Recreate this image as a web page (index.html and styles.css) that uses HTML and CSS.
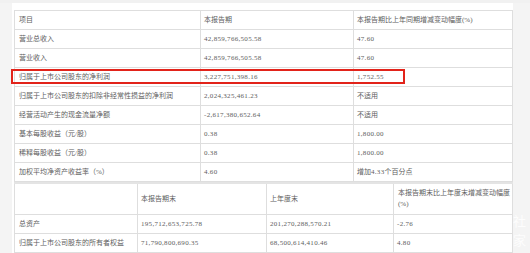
FILE: index.html
```html
<!DOCTYPE html>
<html lang="zh-CN">
<head>
<meta charset="utf-8">
<link rel="stylesheet" href="styles.css">
</head>
<body>
<div class="topstrip"></div>
<div class="panel">
  <div class="tables">
    <table class="t1">
      <colgroup><col class="c1"><col class="c2"><col class="c3"></colgroup>
      <tr><td>项目</td><td>本报告期</td><td>本报告期比上年同期增减变动幅度(%)</td></tr>
      <tr><td>营业总收入</td><td class="n">42,859,766,505.58</td><td class="n">47.60</td></tr>
      <tr><td>营业收入</td><td class="n">42,859,766,505.58</td><td class="n">47.60</td></tr>
      <tr><td>归属于上市公司股东的净利润</td><td class="n">3,227,751,398.16</td><td class="n">1,752.55</td></tr>
      <tr><td>归属于上市公司股东的扣除非经常性损益的净利润</td><td class="n">2,024,325,461.23</td><td>不适用</td></tr>
      <tr><td>经营活动产生的现金流量净额</td><td class="n">-2,617,380,652.64</td><td>不适用</td></tr>
      <tr><td>基本每股收益（元/股）</td><td class="n">0.38</td><td class="n">1,800.00</td></tr>
      <tr><td>稀释每股收益（元/股）</td><td class="n">0.38</td><td class="n">1,800.00</td></tr>
      <tr><td>加权平均净资产收益率（%）</td><td class="n">4.60</td><td>增加<span class="n">4.33</span>个百分点</td></tr>
    </table>
    <table class="t2">
      <colgroup><col class="d1"><col class="d2"><col class="d3"><col class="d4"></colgroup>
      <tr class="hd"><td></td><td>本报告期末</td><td>上年度末</td><td>本报告期末比上年度末增减变动幅度<br>(%)</td></tr>
      <tr><td>总资产</td><td class="n">195,712,653,725.78</td><td class="n">201,270,288,570.21</td><td class="n">-2.76</td></tr>
      <tr><td>归属于上市公司股东的所有者权益</td><td class="n">71,790,800,690.35</td><td class="n">68,500,614,410.46</td><td class="n">4.80</td></tr>
    </table>
    <div class="highlight"></div>
  </div>
</div>
<div class="watermark"><span>社</span><span>家</span></div>
</body>
</html>
```
FILE: styles.css
```css
html, body {
  margin: 0;
  padding: 0;
}
body {
  background: #f4f4f4;
  width: 530px;
  height: 253px;
  overflow: hidden;
  position: relative;
  font-family: "Liberation Serif", "Noto Sans CJK SC", serif;
  color: #5e5e5e;
}
.topstrip {
  height: 3px;
  background: #f1f1f1;
}
.panel {
  margin-left: 12px;
  width: 501px;
  background: #fff;
  padding: 7px 1px 0 2px;
  box-sizing: border-box;
  height: 250px;
}
.tables {
  position: relative;
  width: 498px;
}
table {
  border-collapse: collapse;
  width: 498px;
  table-layout: fixed;
}
td {
  border: 1px solid #dedede;
  padding: 0 0 0 3px;
  font-size: 7px;
  line-height: 11px;
  height: 18px;
  vertical-align: middle;
  white-space: nowrap;
  overflow: hidden;
}
td:first-child { padding-left: 4px; }
.n {
  letter-spacing: 0.3px;
}
.c1 { width: 186px; }
.c2 { width: 153px; }
.c3 { width: 159px; }
.t2 tr:first-child td { border-top: 2px solid #e4e4e4; }
.d1 { width: 123px; }
.d2 { width: 129px; }
.d3 { width: 127px; }
.d4 { width: 119px; }
.t2 .hd td {
  height: 30px;
}
.t2 .hd td:last-child {
  padding-left: 4px;
}
.highlight {
  position: absolute;
  left: -3px;
  top: 59px;
  width: 394px;
  height: 15px;
  border: 2px solid #e2231a;
  box-sizing: border-box;
  pointer-events: none;
}
.watermark {
  position: absolute;
  left: 513px;
  top: 211px;
  display: flex;
  flex-direction: column;
  gap: 0;
  font-family: "Noto Sans CJK SC", sans-serif;
  font-size: 13px;
  line-height: 19px;
  color: rgba(255, 255, 255, 0.85);
}
```
